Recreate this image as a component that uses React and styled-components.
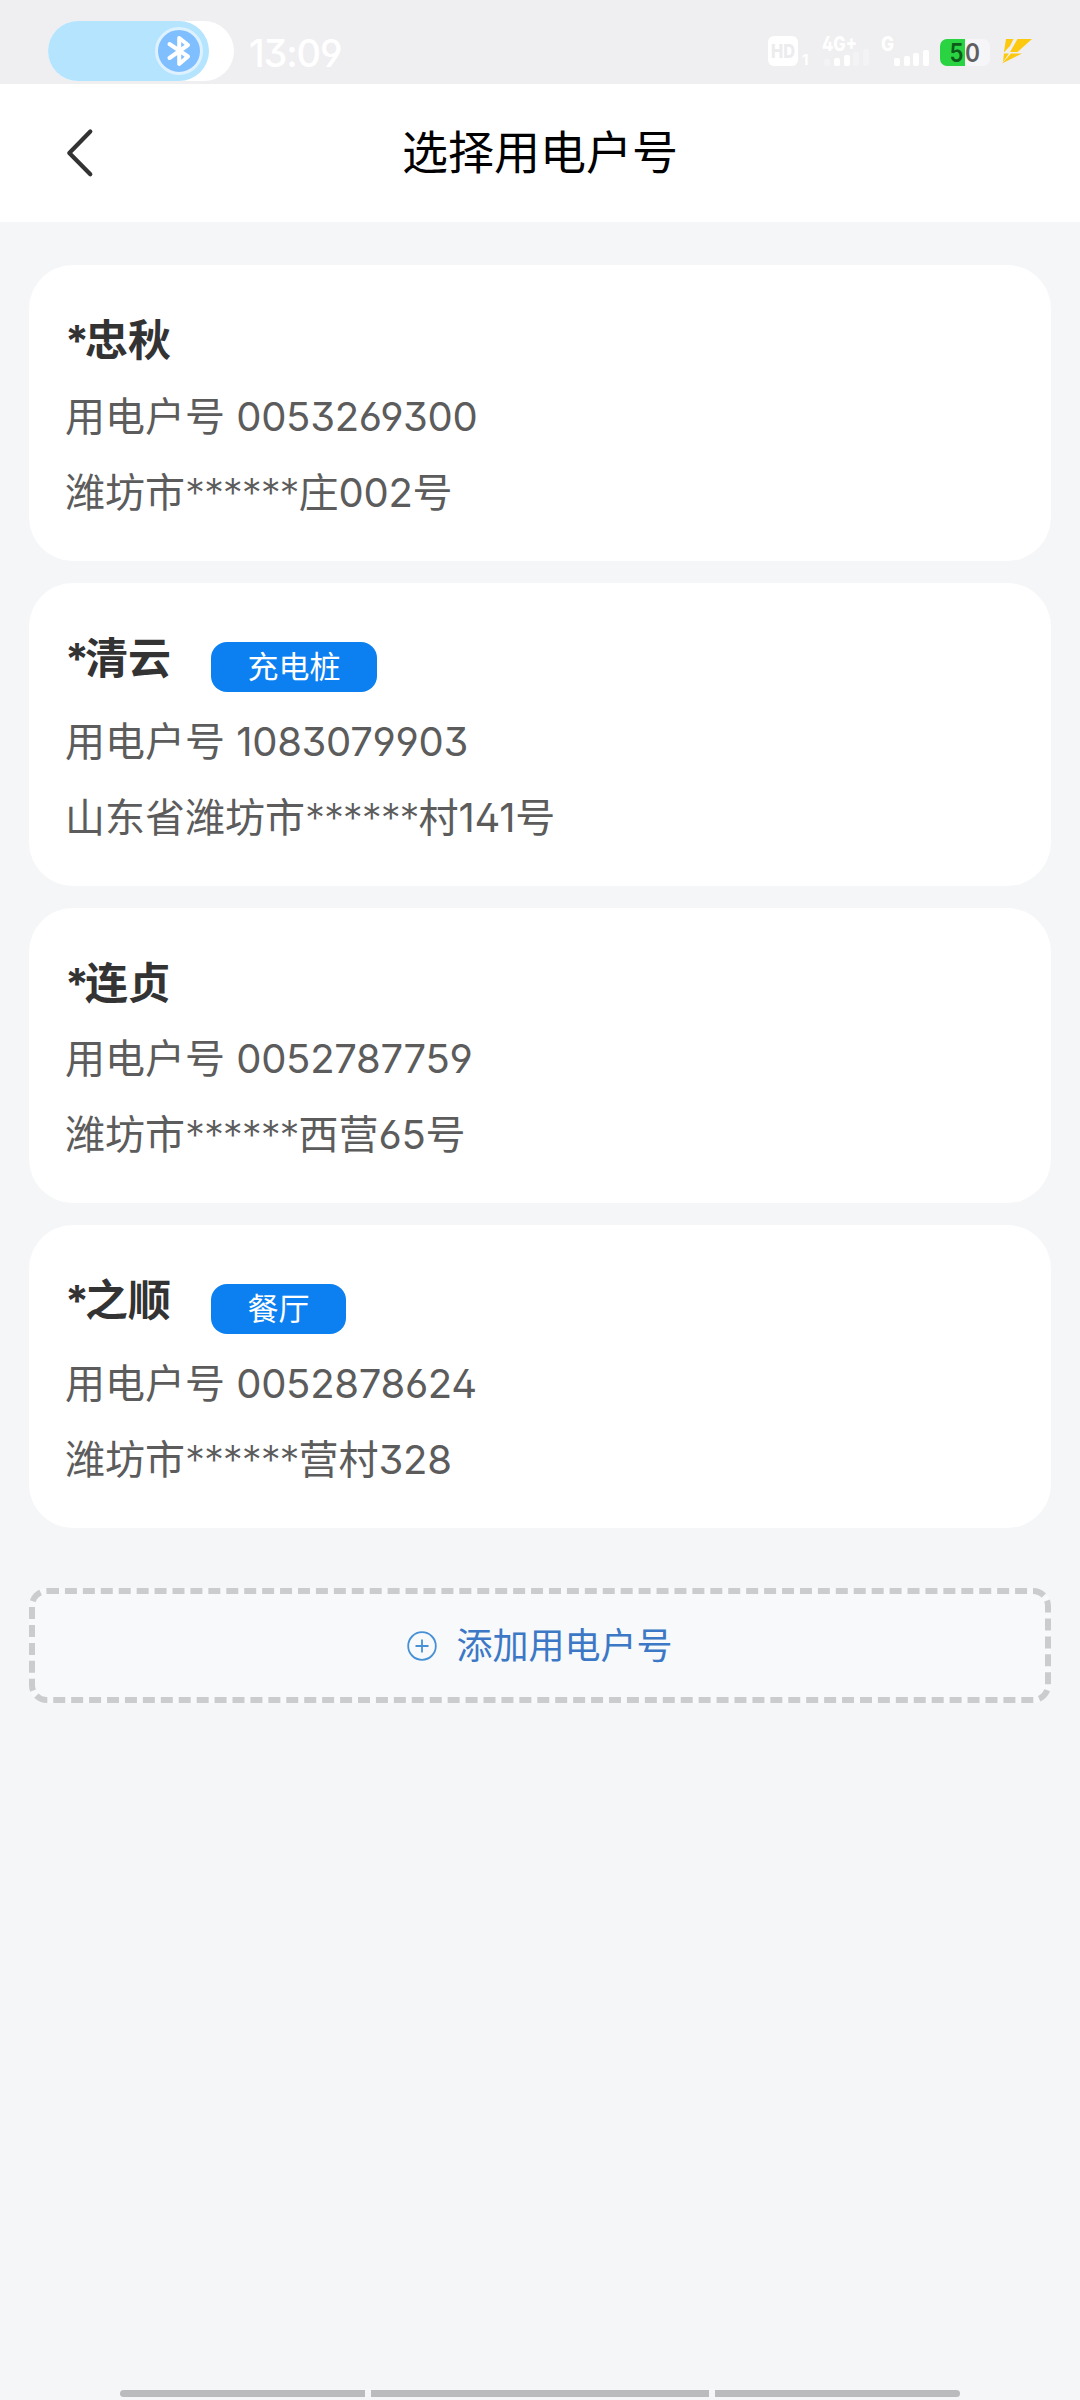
import React from 'react'
import styled, { createGlobalStyle } from 'styled-components'

const GlobalStyle = createGlobalStyle`
	* {
		box-sizing: border-box;
	}
	body {
		margin: 0;
		background: #f4f6f8;
		font-family: Inter, 'Noto Sans CJK SC', sans-serif;
		font-feature-settings: 'ss01';
	}
`

const Screen = styled.div`
	display: flex;
	flex-direction: column;
	width: 1080px;
	height: 2400px;
	background: #f4f6f8;
	overflow: hidden;
`

const StatusBar = styled.div`
	display: flex;
	justify-content: space-between;
	height: 84px;
	background: #efeff1;
`

const StatusLeft = styled.div`
	display: flex;
	padding: 21px 0 0 48px;
`

const Pill = styled.div`
	width: 186px;
	height: 60px;
	border-radius: 30px;
	background: #fff;
`

const PillFill = styled.div`
	display: flex;
	align-items: center;
	justify-content: flex-end;
	width: 161px;
	height: 60px;
	padding-right: 6px;
	border-radius: 30px;
	background: #b5e4ff;
`

const Clock = styled.div`
	margin: 9px 0 0 15px;
	height: 46px;
	line-height: 46px;
	font-size: 38px;
	font-weight: 500;
	letter-spacing: -1.2px;
	color: #fff;
`

const StatusIcons = styled.svg`
	display: block;
	width: 300px;
	height: 84px;
	margin-right: 20px;
`

const Header = styled.header`
	display: grid;
	grid-template-columns: 160px 1fr 160px;
	align-items: center;
	height: 138px;
	background: #fff;
`

const BackButton = styled.button`
	display: flex;
	padding: 0 0 0 64px;
	border: 0;
	background: none;
`

const Title = styled.h1`
	margin: 0;
	padding-bottom: 3px;
	text-align: center;
	font-size: 46px;
	font-weight: 400;
	line-height: 60px;
	color: #000;
`

const Content = styled.main`
	display: flex;
	flex: 1;
	flex-direction: column;
	padding: 43px 29px 0;
`

const CardList = styled.div`
	display: flex;
	flex-direction: column;
	gap: 22px;
`

const Card = styled.section`
	padding: 37px 36px 30px;
	border-radius: 44px;
	background: #fff;
`

const NameRow = styled.div`
	display: flex;
	align-items: flex-start;
	height: ${props => (props.$tagged ? 84 : 76.6)}px;
`

const Name = styled.div`
	height: 76px;
	line-height: 76px;
	font-size: 43px;
	font-weight: 700;
	color: #333;
`

const Star = styled.span`
	letter-spacing: -4px;
`

const Tag = styled.div`
	margin: 22px 0 0 40px;
	height: 50px;
	padding: 0 36.5px;
	border-radius: 16px;
	line-height: 50px;
	font-size: 31px;
	color: #fff;
	background: #0c80f0;
`

const Line = styled.div`
	height: 76px;
	line-height: 76px;
	font-size: 40px;
	white-space: pre;
	color: #5c5c5c;
`

const Digits = styled.span`
	letter-spacing: -0.3px;
`

const Mask = styled.span`
	font-weight: 300;
	letter-spacing: -1.1px;
`

const AddButton = styled.button`
	display: flex;
	align-items: center;
	justify-content: center;
	gap: 19px;
	height: 115px;
	margin-top: 60px;
	padding: 0;
	border: 6px dashed #cbccce;
	border-radius: 18px;
	font-family: inherit;
	color: #3c78c6;
	background: #f7f9fb;
`

const AddLabel = styled.span`
	font-size: 36px;
	line-height: 50px;
`

const NavBar = styled.div`
	display: flex;
	gap: 6px;
	width: 840px;
	height: 10px;
	margin: 0 auto;
`

const NavSegment = styled.div`
	flex: ${props => props.$grow} 1 0;
	height: 7px;
	border-radius: ${props => props.$radius || '0'};
	background: #babbbd;
`

const accounts = [
	{ name: '忠秋', number: '0053269300', city: '潍坊市', place: '庄', door: '002', suffix: '号' },
	{ name: '清云', tag: '充电桩', number: '1083079903', city: '山东省潍坊市', place: '村', door: '141', suffix: '号' },
	{ name: '连贞', number: '0052787759', city: '潍坊市', place: '西营', door: '65', suffix: '号' },
	{ name: '之顺', tag: '餐厅', number: '0052878624', city: '潍坊市', place: '营村', door: '328', suffix: '' }
]

const BluetoothIcon = () => (
	<svg width="48" height="48" viewBox="0 0 48 48" fill="none">
		<circle cx="24" cy="24" r="22.5" fill="#80bfff" stroke="#def1ff" strokeWidth="3" />
		<path
			d="M14.5 17 L33 29.5 L24.2 37 V11 L33 18 L14.5 31"
			stroke="#fff"
			strokeWidth="4"
			strokeLinecap="round"
			strokeLinejoin="round"
		/>
	</svg>
)

const BackIcon = () => (
	<svg width="32" height="50" viewBox="0 0 32 50" fill="none">
		<path d="M26.3 3.5 L5.3 25 L26.3 46.3" stroke="#333" strokeWidth="4.2" strokeLinecap="round" strokeLinejoin="round" />
	</svg>
)

const PlusIcon = () => (
	<svg width="30" height="30" viewBox="0 0 30 30" fill="none" stroke="#4690d6" strokeWidth="1.8">
		<circle cx="15" cy="15" r="13.8" />
		<path d="M15 8.5 V21.5 M8.5 15 H21.5" />
	</svg>
)

const Indicators = () => (
	<StatusIcons viewBox="760 0 300 84" fontFamily="Inter, sans-serif">
		<rect x="768" y="36" width="30" height="30" rx="6" fill="#fff" />
		<text x="771" y="58" fontSize="19" fontWeight="800" textLength="24" lengthAdjust="spacingAndGlyphs" fill="#ececee">HD</text>
		<text x="802" y="65" fontSize="15" fontWeight="700" fill="#fff">1</text>

		<text x="822" y="51" fontSize="20" fontWeight="800" textLength="35" lengthAdjust="spacingAndGlyphs" fill="#fff">4G+</text>
		<g fill="#f3f3f5">
			<rect x="824" y="59" width="6" height="7" rx="2" />
			<rect x="853" y="52" width="6" height="14" rx="2" />
			<rect x="863" y="49" width="6" height="17" rx="2" />
		</g>
		<g fill="#fff">
			<rect x="834" y="58" width="6" height="8" rx="2" />
			<rect x="844" y="55" width="6" height="11" rx="2" />
		</g>

		<text x="881" y="51" fontSize="20" fontWeight="800" textLength="13" lengthAdjust="spacingAndGlyphs" fill="#fff">G</text>
		<g fill="#fff">
			<rect x="894" y="58" width="6" height="8" rx="2" />
			<rect x="904" y="56" width="6" height="10" rx="2" />
			<rect x="913" y="53" width="6" height="13" rx="2" />
			<rect x="923" y="50" width="6" height="16" rx="2" />
		</g>

		<rect x="940" y="39" width="50" height="27" rx="7" fill="#f6f6f8" />
		<path d="M965 39 H947 A7 7 0 0 0 940 46 V59 A7 7 0 0 0 947 66 H965 Z" fill="#29d341" />
		<text x="949.5" y="62" fontSize="25" fontWeight="600" textLength="14" lengthAdjust="spacingAndGlyphs" fill="#0e5a1b">5</text>
		<text x="965" y="62" fontSize="25" fontWeight="600" textLength="15" lengthAdjust="spacingAndGlyphs" fill="#5f5f61">0</text>

		<g fill="#fdc90f">
			<path d="M1006 39 H1013.5 L1010 46 L1003.8 52.5 Z" />
			<path d="M1017.5 39 H1032 L1017.5 52 H1010 Z" />
			<path d="M1004 53.5 H1009 L1003 62 Z" />
			<path d="M1011 53.5 H1022 L1002 63.5 Z" />
		</g>
	</StatusIcons>
)

const AccountCard = ({ account }) => (
	<Card>
		<NameRow $tagged={Boolean(account.tag)}>
			<Name>
				<Star>*</Star>
				{account.name}
			</Name>
			{account.tag && <Tag>{account.tag}</Tag>}
		</NameRow>
		<Line>
			用电户号 <Digits>{account.number}</Digits>
		</Line>
		<Line>
			{account.city}
			<Mask>******</Mask>
			{account.place}
			<Digits>{account.door}</Digits>
			{account.suffix}
		</Line>
	</Card>
)

const App = () => (
	<Screen>
		<GlobalStyle />
		<StatusBar>
			<StatusLeft>
				<Pill>
					<PillFill>
						<BluetoothIcon />
					</PillFill>
				</Pill>
				<Clock>13:09</Clock>
			</StatusLeft>
			<Indicators />
		</StatusBar>
		<Header>
			<BackButton>
				<BackIcon />
			</BackButton>
			<Title>选择用电户号</Title>
		</Header>
		<Content>
			<CardList>
				{accounts.map(account => (
					<AccountCard key={account.number} account={account} />
				))}
			</CardList>
			<AddButton>
				<PlusIcon />
				<AddLabel>添加用电户号</AddLabel>
			</AddButton>
		</Content>
		<NavBar>
			<NavSegment $grow={245} $radius="4px 0 0 4px" />
			<NavSegment $grow={338} />
			<NavSegment $grow={245} $radius="0 4px 4px 0" />
		</NavBar>
	</Screen>
)

export default App
